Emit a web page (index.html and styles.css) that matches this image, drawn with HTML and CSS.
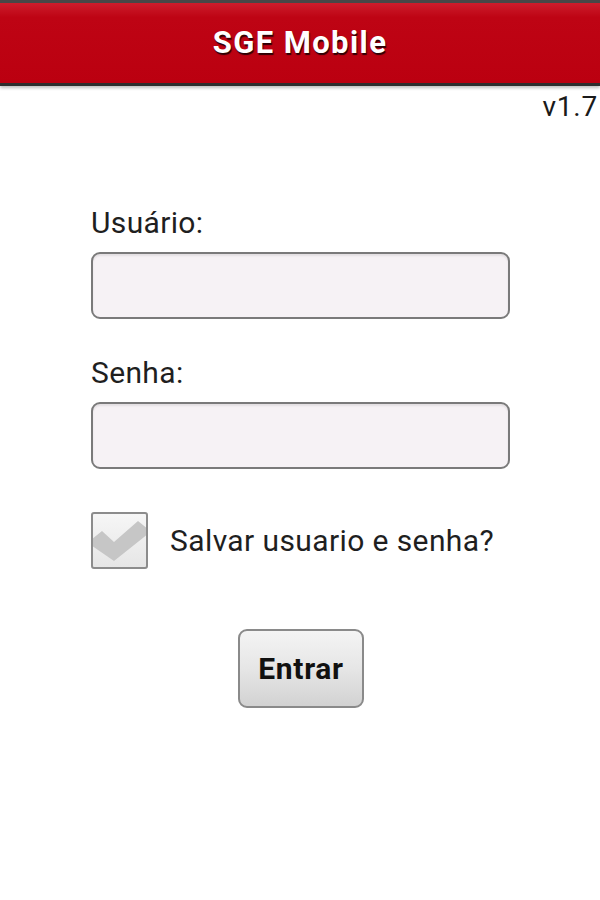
FILE: index.html
```html
<!DOCTYPE html>
<html lang="pt">
<head>
<meta charset="utf-8">
<title>SGE Mobile</title>
<link rel="stylesheet" href="styles.css">
</head>
<body>
<header class="titlebar">
  <h1 class="title">SGE Mobile</h1>
</header>
<div class="version">v1.7</div>
<form class="login">
  <label class="field-label" for="user">Usuário:</label>
  <input class="field" id="user" type="text">
  <label class="field-label second" for="pass">Senha:</label>
  <input class="field" id="pass" type="password">
  <div class="remember">
    <span class="checkbox">
      <svg viewBox="0 0 57 57" width="57" height="57" aria-hidden="true">
        <polygon points="0,28 11,19 23,30 47,9 57,17 57,22 23,49 0,33" fill="#c6c6c6"/>
      </svg>
    </span>
    <span class="remember-text">Salvar usuario e senha?</span>
  </div>
  <div class="actions">
    <button class="btn" type="button">Entrar</button>
  </div>
</form>
</body>
</html>
```
FILE: styles.css
```css
html, body {
  margin: 0;
  padding: 0;
  background: #ffffff;
}
body {
  font-family: Roboto, "Noto Sans", "Liberation Sans", sans-serif;
  color: #1a1a1a;
}
.titlebar {
  height: 80px;
  border-top: 3px solid #474747;
  border-bottom: 3px solid #2e2e2e;
  background: linear-gradient(#cc1d2c 0%, #be0414 18%, #bb0010 100%);
  box-shadow: 0 2px 3px rgba(0,0,0,0.25);
  display: flex;
  align-items: center;
  justify-content: center;
}
.title {
  margin: 0 0 2px 0;
  font-size: 31px;
  font-weight: 700;
  color: #ffffff;
  text-shadow: 1px 2px 1px rgba(0,0,0,0.75);
  letter-spacing: 1.4px;
}
.version {
  margin-top: 5px;
  padding-right: 2px;
  text-align: right;
  font-size: 28px;
  line-height: 31px;
  letter-spacing: 0.8px;
  color: #1a1a1a;
}
.login {
  margin: 83px 0 0 91px;
  width: 419px;
  display: flex;
  flex-direction: column;
}
.field-label {
  font-size: 30px;
  line-height: 36px;
  letter-spacing: 0.35px;
  color: #1f1f1f;
}
.field-label.second {
  margin-top: 36px;
}
.field {
  box-sizing: border-box;
  margin-top: 11px;
  height: 67px;
  width: 419px;
  border: 2px solid #7a7a7a;
  border-radius: 9px;
  background: #f6f2f5;
  box-shadow: inset 0 2px 2px rgba(0,0,0,0.08);
  font: inherit;
  font-size: 28px;
  padding: 0 12px;
  outline: none;
}
.remember {
  margin-top: 43px;
  display: flex;
  align-items: center;
  gap: 22px;
}
.checkbox {
  box-sizing: border-box;
  width: 57px;
  height: 57px;
  border: 2px solid #8c8c8c;
  border-radius: 3px;
  background: linear-gradient(#f6f6f6, #e6e6e6);
  overflow: hidden;
  display: block;
  flex: none;
}
.checkbox svg {
  display: block;
  margin: -2px;
}
.remember-text {
  font-size: 30px;
  line-height: 36px;
  letter-spacing: 0.4px;
  color: #1f1f1f;
}
.actions {
  margin-top: 60px;
  display: flex;
  justify-content: center;
  margin-left: -91px;
  width: 600px;
}
.btn {
  box-sizing: border-box;
  width: 126px;
  height: 79px;
  margin-left: 2px;
  border: 2px solid #8a8a8a;
  border-radius: 9px;
  background: linear-gradient(#f4f4f4 0%, #e6e6e6 50%, #d2d2d2 100%);
  font-family: inherit;
  font-size: 30px;
  font-weight: 700;
  letter-spacing: 0.7px;
  color: #111111;
  padding: 0;
}
```
